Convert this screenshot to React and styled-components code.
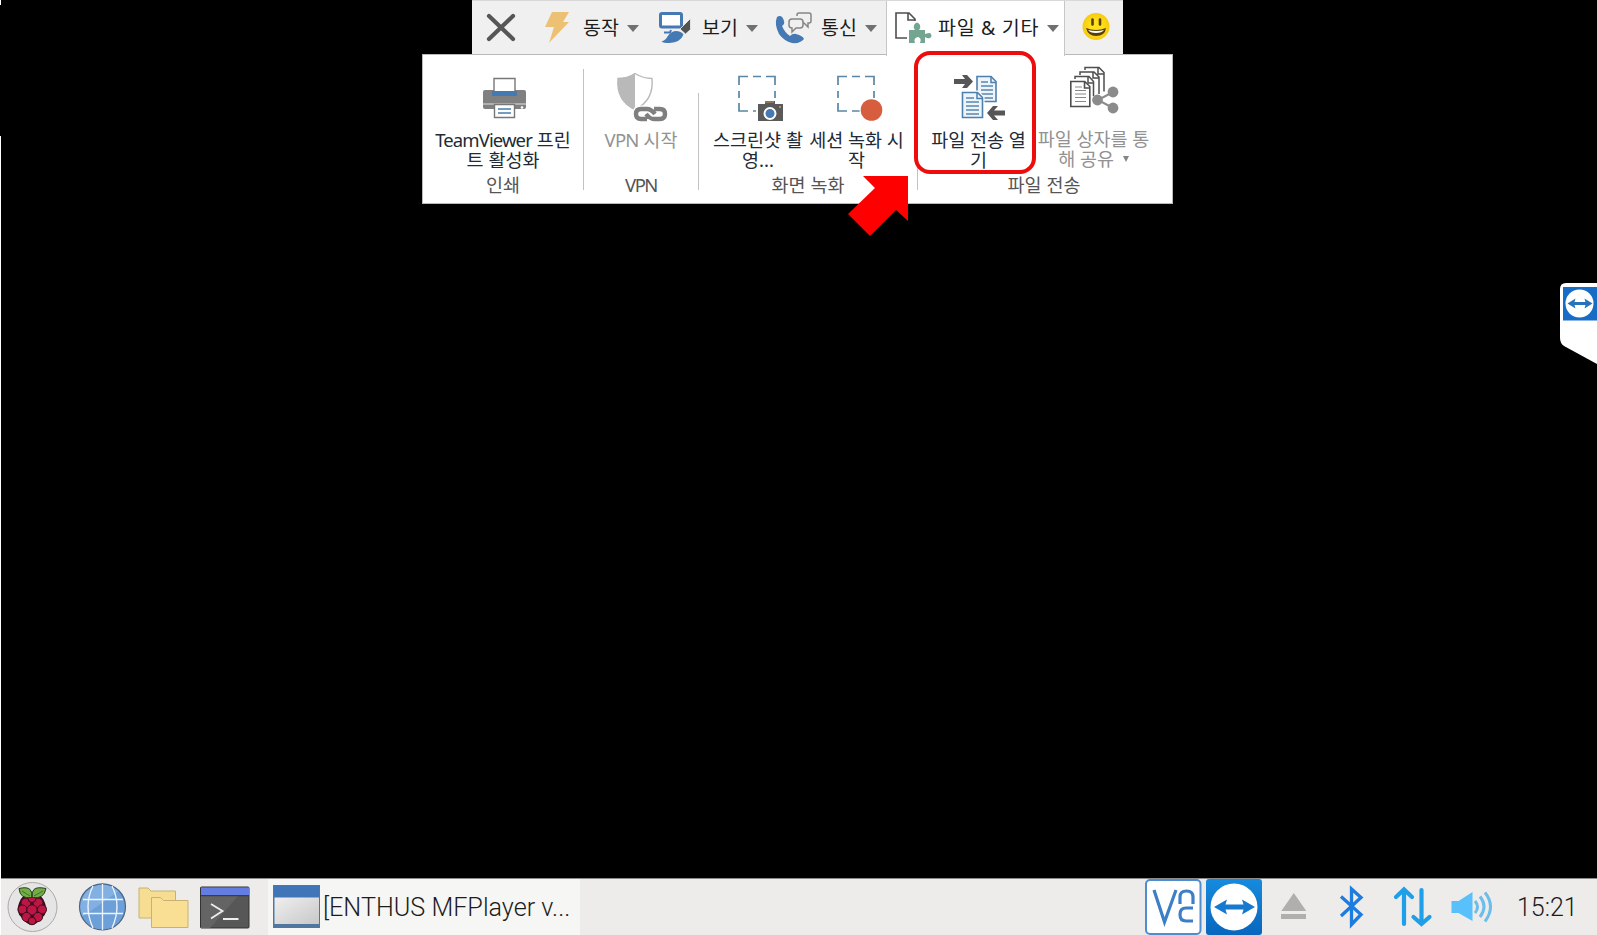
import React from 'react';
import styled, { createGlobalStyle } from 'styled-components';

const GlobalStyle = createGlobalStyle`
  * { box-sizing: border-box; }
  body { margin: 0; background: #000; overflow: hidden; }
`;

const Screen = styled.div`
  position: relative;
  display: flex;
  flex-direction: column;
  width: 1597px;
  height: 935px;
  background: #000;
  color: #222;
  font-family: 'Noto Sans', 'Noto Sans CJK KR', sans-serif;
`;

const Desktop = styled.main`
  flex: 1;
  display: flex;
  flex-direction: column;
  align-items: flex-start;
`;

const Edge = styled.div`
  position: absolute;
  left: 0;
  top: ${(p) => p.$top}px;
  width: 1px;
  height: ${(p) => p.$height}px;
  background: #fff;
`;

const Svg = styled.svg`
  display: block;
  flex: none;
  overflow: visible;
`;

/* Icons are drawn on one shared grid; box is [x, y, width, height]. */
const Icon = ({ box, children }) => (
  <Svg width={box[2]} height={box[3]} viewBox={box.join(' ')} fill="none">
    {children}
  </Svg>
);

/* ---------- session toolbar ---------- */

const TabBar = styled.nav`
  display: flex;
  height: 54px;
  margin-left: 472px;
  border-top: 1px solid #d9d9d9;
  background: #f0f0f0;
`;

const BarCell = styled.div`
  display: flex;
  align-items: flex-start;
  width: ${(p) => p.$width}px;
  padding: ${(p) => p.$pad};
`;

const Tab = styled.div`
  position: relative;
  display: flex;
  align-items: flex-start;
  width: ${(p) => p.$width}px;
  height: ${(p) => (p.$active ? 55 : 53)}px;
  padding: 11px 0 0 ${(p) => (p.$active ? 8 : 4)}px;
  background: ${(p) => (p.$active ? '#fff' : 'transparent')};
  border: solid #c6c6c6;
  border-width: ${(p) => (p.$active ? '0 1px' : '0')};
`;

const TabIcon = styled.span`
  width: 35px;
  margin-right: 8px;
`;

const TabLabel = styled.span`
  width: ${(p) => p.$width}px;
  margin-right: 8px;
  font-size: 19.5px;
  line-height: 32px;
  letter-spacing: ${(p) => p.$spacing || 0}px;
  white-space: nowrap;
  color: #1c1c1c;
`;

const Caret = styled.span`
  width: 0;
  margin-top: 13px;
  border: 6px solid transparent;
  border-top: 7px solid #707070;
  border-bottom: 0;
`;

/* ---------- ribbon ---------- */

const Ribbon = styled.section`
  display: flex;
  width: 751px;
  height: 150px;
  margin-left: 422px;
  background: #fff;
  border: 1px solid #b9b9b9;
`;

const Group = styled.div`
  display: flex;
  flex-direction: column;
  width: ${(p) => p.$width}px;
`;

const Divider = styled.div`
  width: 1px;
  height: ${(p) => p.$height}px;
  margin-top: ${(p) => 135 - p.$height}px;
  background: #c2c2c2;
`;

const Actions = styled.div`
  display: flex;
  height: 120px;
  padding-left: ${(p) => p.$pad || 0}px;
`;

const Action = styled.div`
  display: flex;
  flex-direction: column;
  align-items: center;
  width: ${(p) => p.$width}px;
  color: ${(p) => (p.$disabled ? '#929292' : '#222b35')};
`;

const ActionIcon = styled.div`
  height: ${(p) => p.$height || 75}px;
  padding-top: ${(p) => p.$top}px;
  padding-left: ${(p) => p.$shift || 0}px;
`;

const ActionLabel = styled.div`
  font-size: 18.5px;
  line-height: 20px;
  text-align: center;
  white-space: nowrap;
`;

const Latin = styled.span`
  letter-spacing: ${(p) => p.$spacing}px;
`;

const SmallCaret = styled.span`
  display: inline-block;
  margin: 0 0 4px 4px;
  border: 3px solid transparent;
  border-top: 6px solid #858585;
  border-bottom: 0;
`;

const GroupName = styled.div`
  font-size: 18.5px;
  line-height: 20px;
  text-align: center;
  color: #555;
`;

/* ---------- overlays ---------- */

const Highlight = styled.div`
  position: absolute;
  left: 914px;
  top: 51px;
  width: 122px;
  height: 123px;
  border: 4px solid #ee0d0d;
  border-radius: 16px;
`;

const Pointer = styled.div`
  position: absolute;
  left: 848px;
  top: 175px;
`;

const SidePanel = styled.div`
  position: absolute;
  left: 1560px;
  top: 283px;
`;

/* ---------- taskbar ---------- */

const Taskbar = styled.footer`
  display: flex;
  align-items: flex-start;
  height: 57px;
  background: #edeceb;
  border-top: 1px solid #8b8b8b;
`;

const Slot = styled.div`
  width: ${(p) => p.$width}px;
  padding: ${(p) => p.$pad};
`;

const TaskButton = styled.div`
  display: flex;
  width: 312px;
  height: 56px;
  padding: 6px 0 0 5px;
  background: #f6f6f5;
`;

const TaskTitle = styled.span`
  margin-left: 3px;
  font-family: Roboto, sans-serif;
  font-size: 25.2px;
  font-weight: 300;
  line-height: 46px;
  white-space: nowrap;
  color: #1c1c1c;
`;

const Spacer = styled.div`
  flex: 1;
`;

const Clock = styled.time`
  width: 80px;
  font-family: Roboto, sans-serif;
  font-size: 25px;
  font-weight: 300;
  line-height: 58px;
  color: #1c1c1c;
`;

const CloseIcon = () => (
  <Icon box={[486, 13, 30, 30]}>
    <path d="M489 16 513 39M513 16 489 39" stroke="#565656" strokeWidth="4.2" strokeLinecap="round" />
  </Icon>
);

const BoltIcon = () => (
  <Icon box={[540, 12, 35, 32]}>
    <path d="M552 12h17l-6 10h6l-20 21 5-16h-9z" fill="#edc173" />
  </Icon>
);

const ViewIcon = () => (
  <Icon box={[659, 12, 35, 32]}>
    <rect x="660.5" y="13.5" width="21" height="13.500" rx="1.500" fill="#fff" stroke="#4479b3" strokeWidth="3" />
    <path d="M690.500 18.500v11l-5 4.500-5.500-5z" fill="#525252" stroke="#f0f0f0" strokeWidth=".8" />
    <path d="M671 30l-1 2.500h-6" stroke="#4479b3" strokeWidth="2" />
    <path d="M661.500 41.500q4-1 6-5 3-5 8-5.500 6 0 8 3.500-3 8-14 8.500-6 0-8-1.500z" fill="#4479b3" />
  </Icon>
);

const PhoneIcon = () => (
  <Icon box={[778, 12, 35, 32]}>
    <path d="M777 17q5-3 7 4 1 3-2 5 3 7 8 10 3-3 6-2 7 2 8 5-4 5-12 4-8-2-13-9-5-10-2-17z" fill="#4479b3" />
    <path d="M797 16v-1q0-2 2-2h10q2 0 2 2v6q0 2-2 2h-1v4l-4-4h-1" stroke="#858585" strokeWidth="1.5" />
    <path d="M792 19h8q3 0 3 3v3q0 3-3 3h-4l-4 4v-4q-3 0-3-3v-3q0-3 3-3z" stroke="#858585" strokeWidth="1.5" />
  </Icon>
);

const ExtrasIcon = () => (
  <Icon box={[895, 12, 35, 32]}>
    <path d="M907 38h-11V13h13l6 6v2M908 13v7h7" stroke="#4e4e4e" strokeWidth="1.6" />
    <path d="M909 30h6q-2-2-1-5 3-5 6 0 1 3-1 5h6v4q3-1 5-1 3 3 0 5-2 1-5-1v6h-5q2-5-2-6-5 1-3 6h-6z" fill="#73a591" />
  </Icon>
);

const SmileyIcon = () => (
  <Icon box={[1082, 12, 28, 28]}>
    <defs>
      <radialGradient id="face">
        <stop offset=".4" stopColor="#ffe21b" />
        <stop offset="1" stopColor="#f6ca10" />
      </radialGradient>
    </defs>
    <circle cx="1096" cy="26.5" r="13.5" fill="url(#face)" />
    <path d="M1092.500 19.500v5M1100 19.500v5" stroke="#5a3e08" strokeWidth="2.6" strokeLinecap="round" />
    <path d="M1086 28q10 4 20 0-1 8-10 8-8 0-10-8z" fill="#5a3e08" />
    <path d="M1088 30q8 2 16 0-2 3-8 3-6 0-8-3z" fill="#fff" />
  </Icon>
);

const PrinterIcon = () => (
  <Icon box={[482, 77, 44, 42]}>
    <path d="M485 90h39q2 0 2 2v15q0 2-2 2h-39q-2 0-2-2V92q0-2 2-2z" fill="#808080" />
    <path d="M483 104h43" stroke="#e2e2e2" />
    <path d="M494 94V78.500h21V94z" fill="#fff" stroke="#777" strokeWidth="1.4" />
    <path d="M492 91h25v5h-25z" fill="#4479b3" />
    <path d="M494.500 104.500h20v13h-20z" fill="#fff" stroke="#777" strokeWidth="1.4" />
    <path d="M498 109h13M498 113h13" stroke="#4b7da9" strokeWidth="1.5" />
    <circle cx="522" cy="107.500" r="1.300" fill="#fff" />
  </Icon>
);

const ShieldIcon = () => (
  <Icon box={[617, 73, 49, 49]}>
    <path d="M635 73.500q8 5 17 5 2 22-17 31-19-9-17-31 10 0 17-5z" fill="#fff" stroke="#b9b9b9" strokeWidth="1.4" />
    <path d="M635 73q-7 5-17 5-2 23 17 32z" fill="#b9b9b9" />
    <path d="M649 118h-9q-4 0-4-4 0-5 4-5h9q4 0 5 4M652 109h9q4 0 4 5 0 5-4 5h-10q-4 0-5-5" stroke="#fff" strokeWidth="7" />
    <path d="M647 119h-6q-5 0-5-5t5-5h6q4 0 8 5M654 109h6q5 0 5 5t-5 5h-6q-4 0-8-5" stroke="#7f7f7f" strokeWidth="4.400" />
  </Icon>
);

const Frame = ({ x }) => (
  <path
    transform={`translate(${x} 0)`}
    d="M0 85v-8.500h9M14 76.500h8M27 76.500h9V85M36 91v7M36 104v7h-9M22 111h-8M9 111H0v-8M0 91v7"
    stroke="#5986a5"
    strokeWidth="1.700"
  />
);

const ScreenshotIcon = () => (
  <Icon box={[738, 75, 45, 47]}>
    <Frame x={739} />
    <path d="M756 102h28v20h-28z" fill="#fff" />
    <path d="M765 104v-3h10v3h8v17h-25v-17z" fill="#5a5a5a" />
    <path d="M765 102h9" stroke="#8e765b" strokeWidth="2" />
    <circle cx="770" cy="113.500" r="5.500" fill="#4479b3" stroke="#fff" strokeWidth="2" />
    <circle cx="780" cy="107" r="1" fill="#c8a36d" />
  </Icon>
);

const RecordIcon = () => (
  <Icon box={[837, 75, 46, 47]}>
    <Frame x={838} />
    <circle cx="871.500" cy="110" r="12" fill="#fff" />
    <circle cx="871.500" cy="110" r="10.800" fill="#d65d3e" />
  </Icon>
);

const TransferIcon = () => (
  <Icon box={[954, 74, 51, 46]}>
    <path d="M977 76.500h14l5 5v20h-19z" fill="#eef5fa" stroke="#4e80ad" strokeWidth="1.600" />
    <path d="M991 76.500v6h5" stroke="#4e80ad" strokeWidth="1.500" />
    <path d="M981 82h7M981 86h12M981 90h12M981 94h12M981 98h12" stroke="#5986ae" strokeWidth="1.300" />
    <path d="M962.500 92.500h15l5 5v20h-20z" fill="#eef5fa" stroke="#fff" strokeWidth="4" />
    <path d="M962.500 92.500h15l5 5v20h-20z" fill="#eef5fa" stroke="#4e80ad" strokeWidth="1.600" />
    <path d="M977 92.500v6h5" stroke="#4e80ad" strokeWidth="1.500" />
    <path d="M966 98h8M966 102h13M966 106h13M966 110h13M966 114h13" stroke="#5986ae" strokeWidth="1.300" />
    <path d="M954 79h11l-3-4h5l6 6.500-6 6.500h-5l3-4h-11zM1005 110.500h-11l4-4.500h-5l-6 7 6 7h5l-4-4.500h11z" fill="#565656" />
  </Icon>
);

const ShareIcon = () => (
  <Icon box={[1070, 66, 49, 49]}>
    <path d="M1085 70v-2.500h14l5 5v19M1098 68v6h6M1080 75v-3h14l5 5v17M1093 72v6h6M1075 79v-2.500h14l4.500 5V96M1088 77v6h5" stroke="#4e4e4e" strokeWidth="1.500" />
    <path d="M1070.800 81.500h14l5 5v20h-19zM1084.500 82v6h5" fill="#fff" stroke="#4e4e4e" strokeWidth="1.600" />
    <path d="M1075 87h7M1075 90.500h11M1075 94h11M1075 97.500h11M1075 101.500h11" stroke="#888" strokeWidth="1.100" />
    <path d="M1113 92 1098 100l15 8" stroke="#8b8b8b" strokeWidth="2" />
    <circle cx="1097.500" cy="100" r="5.400" fill="#8b8b8b" />
    <circle cx="1113" cy="92" r="5.400" fill="#8b8b8b" />
    <circle cx="1113" cy="108" r="5.400" fill="#8b8b8b" />
  </Icon>
);

const berries = [
  [26, 903, 5], [38, 903, 5], [32, 898.5, 4], [22.5, 909.5, 4.5], [42, 909.5, 4.5],
  [32, 910, 5.2], [26.5, 917, 4.6], [38, 917, 4.6], [32, 921, 3.8],
];

const RaspberryIcon = () => (
  <Icon box={[7, 882, 50, 50]}>
    <circle cx="32.500" cy="907" r="24.500" fill="#e5e5e5" stroke="#aaa" />
    <path d="M32 894q10-1 13 9 4 9-3 15-6 7-10 7-5 0-10-7-7-6-3-15 3-10 13-9z" fill="#3b101b" />
    {berries.map(([x, y, r]) => (
      <circle key={`${x}-${y}`} cx={x} cy={y} r={r} fill="#bd1646" stroke="#3b101b" />
    ))}
    <path d="M32 897.500q-12 2-13-9 8-2 11 1 3 3 2 8zM32 897.500q12 2 14-9-9-2-12 1-3 3-2 8z" fill="#72ae46" stroke="#283d1f" strokeWidth="1" />
    <path d="M22 891l8 5M43 891l-9 5" stroke="#385f28" strokeWidth=".8" />
  </Icon>
);

const GlobeIcon = () => (
  <Icon box={[79, 883, 48, 48]}>
    <circle cx="102.500" cy="906.800" r="23" fill="#6d9fd8" />
    <path d="M82 917A23 23 0 0 1 119 891z" fill="#83b0e3" />
    <circle cx="102.500" cy="906.800" r="23" stroke="#4a6684" strokeWidth="1.200" />
    <path d="M102.500 884v46M83 899.500h40M83 913.500h40M93 886q-10 20 0 42M112 886q10 20 0 42" stroke="#edf5fc" strokeWidth="1.300" />
  </Icon>
);

const FoldersIcon = () => (
  <Icon box={[138, 886, 51, 42]}>
    <path d="M139 887h9l3 3h24.500v27H139z" fill="#f6dd91" stroke="#c6b274" />
    <path d="M151.500 896.500h9l3 3H188v27h-36.500z" fill="#f8df93" stroke="#c6b274" />
  </Icon>
);

const TerminalIcon = () => (
  <Icon box={[200, 886, 50, 43]}>
    <rect x="200.500" y="887" width="48.500" height="41" rx="1" fill="#575757" stroke="#333" />
    <path d="M201 896h37l-28 32h-9z" fill="#646464" />
    <path d="M201 887.500h48v8h-48z" fill="#637de0" />
    <path d="M201 895.700h48" stroke="#333" />
    <path d="m211 904 11.500 7L211 918.500M223 919h15.500" stroke="#eee" strokeWidth="1.800" />
  </Icon>
);

const WindowIcon = () => (
  <Icon box={[273, 885, 47, 43]}>
    <defs>
      <linearGradient id="pane" x1="0" y1="0" x2="1" y2="1">
        <stop stopColor="#efefef" />
        <stop offset="1" stopColor="#c8c8c8" />
      </linearGradient>
    </defs>
    <path d="M273 885h47v43h-47z" fill="#52779f" />
    <path d="M274 886h45v11h-45z" fill="#4075b8" />
    <path d="M274.500 897.500h44.500V924h-44.500z" fill="url(#pane)" />
  </Icon>
);

const VncIcon = () => (
  <Icon box={[1145, 879, 56, 56]}>
    <rect x="1146" y="880" width="54.500" height="54" rx="4" fill="#fff" stroke="#4f8dd1" strokeWidth="2" />
    <path d="m1154 890 10.500 32L1176 890M1180 904v-7q0-6 6.500-6t6.500 6v7M1193 908h-7q-6 0-6 6.500t6 6.500h7" stroke="#3d7fc7" strokeWidth="3.200" />
  </Icon>
);

const ViewerIcon = () => (
  <Icon box={[1206, 879, 56, 56]}>
    <defs>
      <linearGradient id="brand" x1="0" y1="0" x2="0" y2="1">
        <stop stopColor="#168bdd" />
        <stop offset="1" stopColor="#0866be" />
      </linearGradient>
    </defs>
    <rect x="1206" y="879" width="56" height="56" rx="3" fill="url(#brand)" />
    <circle cx="1234" cy="907" r="23.500" fill="#fff" />
    <path d="m1214 907 13-7.500-1.500 5h18l-1.500-5 13 7.500-13 7.500 1.500-5h-18l1.500 5z" fill="#1679d0" />
  </Icon>
);

const EjectIcon = () => (
  <Icon box={[1281, 893, 26, 27]}>
    <path d="m1293.800 893 12.500 18h-25zM1281 914h25v5h-25z" fill="#b0afae" />
  </Icon>
);

const BluetoothIcon = () => (
  <Icon box={[1340, 885, 24, 44]}>
    <path d="m1341 896.500 20 18-9.500 10V889l9.500 8.500-20 18.500" stroke="#1c7ce0" strokeWidth="3.300" />
  </Icon>
);

const NetworkIcon = () => (
  <Icon box={[1394, 888, 38, 38]}>
    <path d="M1404 924v-34M1396 897l8-7.500 8 7.500M1421.500 890v34M1413.500 917l8 7 8-7" stroke="#209fe9" strokeWidth="4.200" strokeLinecap="round" />
  </Icon>
);

const SpeakerIcon = () => (
  <Icon box={[1451, 891, 43, 32]}>
    <path d="M1451.500 901h7l14-9v29l-14-8h-7z" fill="#58c0fb" />
    <path d="M1475 901q5 6 0 12M1480 896.500q8 10 0 20.500M1485 892.500q11 14 0 29" stroke="#6dbdeb" strokeWidth="3" />
  </Icon>
);

const SideTabIcon = () => (
  <Icon box={[1560, 283, 37, 82]}>
    <path d="M1597 283h-31q-6 0-6 6v49q0 5 4 8l33 18z" fill="#fff" />
    <path d="M1563 287h34v33.500h-34z" fill="#196cc5" />
    <circle cx="1579.500" cy="303.500" r="14" fill="#fff" />
    <path d="m1567.500 303.500 8-5-1 3.500h11l-1-3.500 8 5-8 5 1-3.500h-11l1 3.500z" fill="#2871bb" />
  </Icon>
);

export default function App() {
  return (
    <Screen>
      <GlobalStyle />
      <Desktop>
        <TabBar>
          <BarCell $width={64} $pad="12px 0 0 14px"><CloseIcon /></BarCell>
          <Tab $width={119}>
            <TabIcon><BoltIcon /></TabIcon>
            <TabLabel $width={36}>동작</TabLabel>
            <Caret />
          </Tab>
          <Tab $width={119}>
            <TabIcon><ViewIcon /></TabIcon>
            <TabLabel $width={36}>보기</TabLabel>
            <Caret />
          </Tab>
          <Tab $width={112}>
            <TabIcon><PhoneIcon /></TabIcon>
            <TabLabel $width={36}>통신</TabLabel>
            <Caret />
          </Tab>
          <Tab $width={179} $active>
            <TabIcon><ExtrasIcon /></TabIcon>
            <TabLabel $width={101} $spacing={0.7}>파일 &amp; 기타</TabLabel>
            <Caret />
          </Tab>
          <BarCell $width={58} $pad="11px 0 0 17px"><SmileyIcon /></BarCell>
        </TabBar>

        <Ribbon>
          <Group $width={160}>
            <Actions>
              <Action $width={160}>
                <ActionIcon $top={22} $shift={1}><PrinterIcon /></ActionIcon>
                <ActionLabel><Latin $spacing={-0.9}>TeamViewer</Latin> 프린<br />트 활성화</ActionLabel>
              </Action>
            </Actions>
            <GroupName>인쇄</GroupName>
          </Group>
          <Divider $height={121} />
          <Group $width={114}>
            <Actions>
              <Action $width={116} $disabled>
                <ActionIcon $top={18}><ShieldIcon /></ActionIcon>
                <ActionLabel><Latin $spacing={-0.8}>VPN</Latin> 시작</ActionLabel>
              </Action>
            </Actions>
            <GroupName><Latin $spacing={-1.5}>VPN</Latin></GroupName>
          </Group>
          <Divider $height={97} />
          <Group $width={218}>
            <Actions $pad={10}>
              <Action $width={98}>
                <ActionIcon $top={20} $shift={4}><ScreenshotIcon /></ActionIcon>
                <ActionLabel>스크린샷 촬<br />영...</ActionLabel>
              </Action>
              <Action $width={99}>
                <ActionIcon $top={20} $shift={7}><RecordIcon /></ActionIcon>
                <ActionLabel>세션 녹화 시<br />작</ActionLabel>
              </Action>
            </Actions>
            <GroupName>화면 녹화</GroupName>
          </Group>
          <Divider $height={121} />
          <Group $width={252}>
            <Actions $pad={5}>
              <Action $width={111}>
                <ActionIcon $top={19} $shift={1}><TransferIcon /></ActionIcon>
                <ActionLabel>파일 전송 열<br />기</ActionLabel>
              </Action>
              <Action $width={119} $disabled>
                <ActionIcon $top={11} $height={74} $shift={1}><ShareIcon /></ActionIcon>
                <ActionLabel>파일 상자를 통<br />해 공유 <SmallCaret /></ActionLabel>
              </Action>
            </Actions>
            <GroupName>파일 전송</GroupName>
          </Group>
        </Ribbon>
      </Desktop>

      <Taskbar>
        <Slot $width={79} $pad="3px 0 0 7px"><RaspberryIcon /></Slot>
        <Slot $width={59} $pad="4px 0 0"><GlobeIcon /></Slot>
        <Slot $width={62} $pad="8px 0 0"><FoldersIcon /></Slot>
        <Slot $width={68} $pad="7px 0 0"><TerminalIcon /></Slot>
        <TaskButton>
          <WindowIcon />
          <TaskTitle>[ENTHUS MFPlayer v...</TaskTitle>
        </TaskButton>
        <Spacer />
        <Slot $width={61} $pad="0"><VncIcon /></Slot>
        <Slot $width={75} $pad="0"><ViewerIcon /></Slot>
        <Slot $width={59} $pad="14px 0 0"><EjectIcon /></Slot>
        <Slot $width={54} $pad="6px 0 0"><BluetoothIcon /></Slot>
        <Slot $width={57} $pad="9px 0 0"><NetworkIcon /></Slot>
        <Slot $width={66} $pad="12px 0 0"><SpeakerIcon /></Slot>
        <Clock>15:21</Clock>
      </Taskbar>

      <Edge $top={0} $height={5} />
      <Edge $top={136} $height={799} />
      <Highlight />
      <Pointer>
        <Icon box={[848, 175, 61, 61]}>
          <path d="M863 176h45v45l-12-11-26 26-22-22 27-26z" fill="#fe0000" />
        </Icon>
      </Pointer>
      <SidePanel><SideTabIcon /></SidePanel>
    </Screen>
  );
}
